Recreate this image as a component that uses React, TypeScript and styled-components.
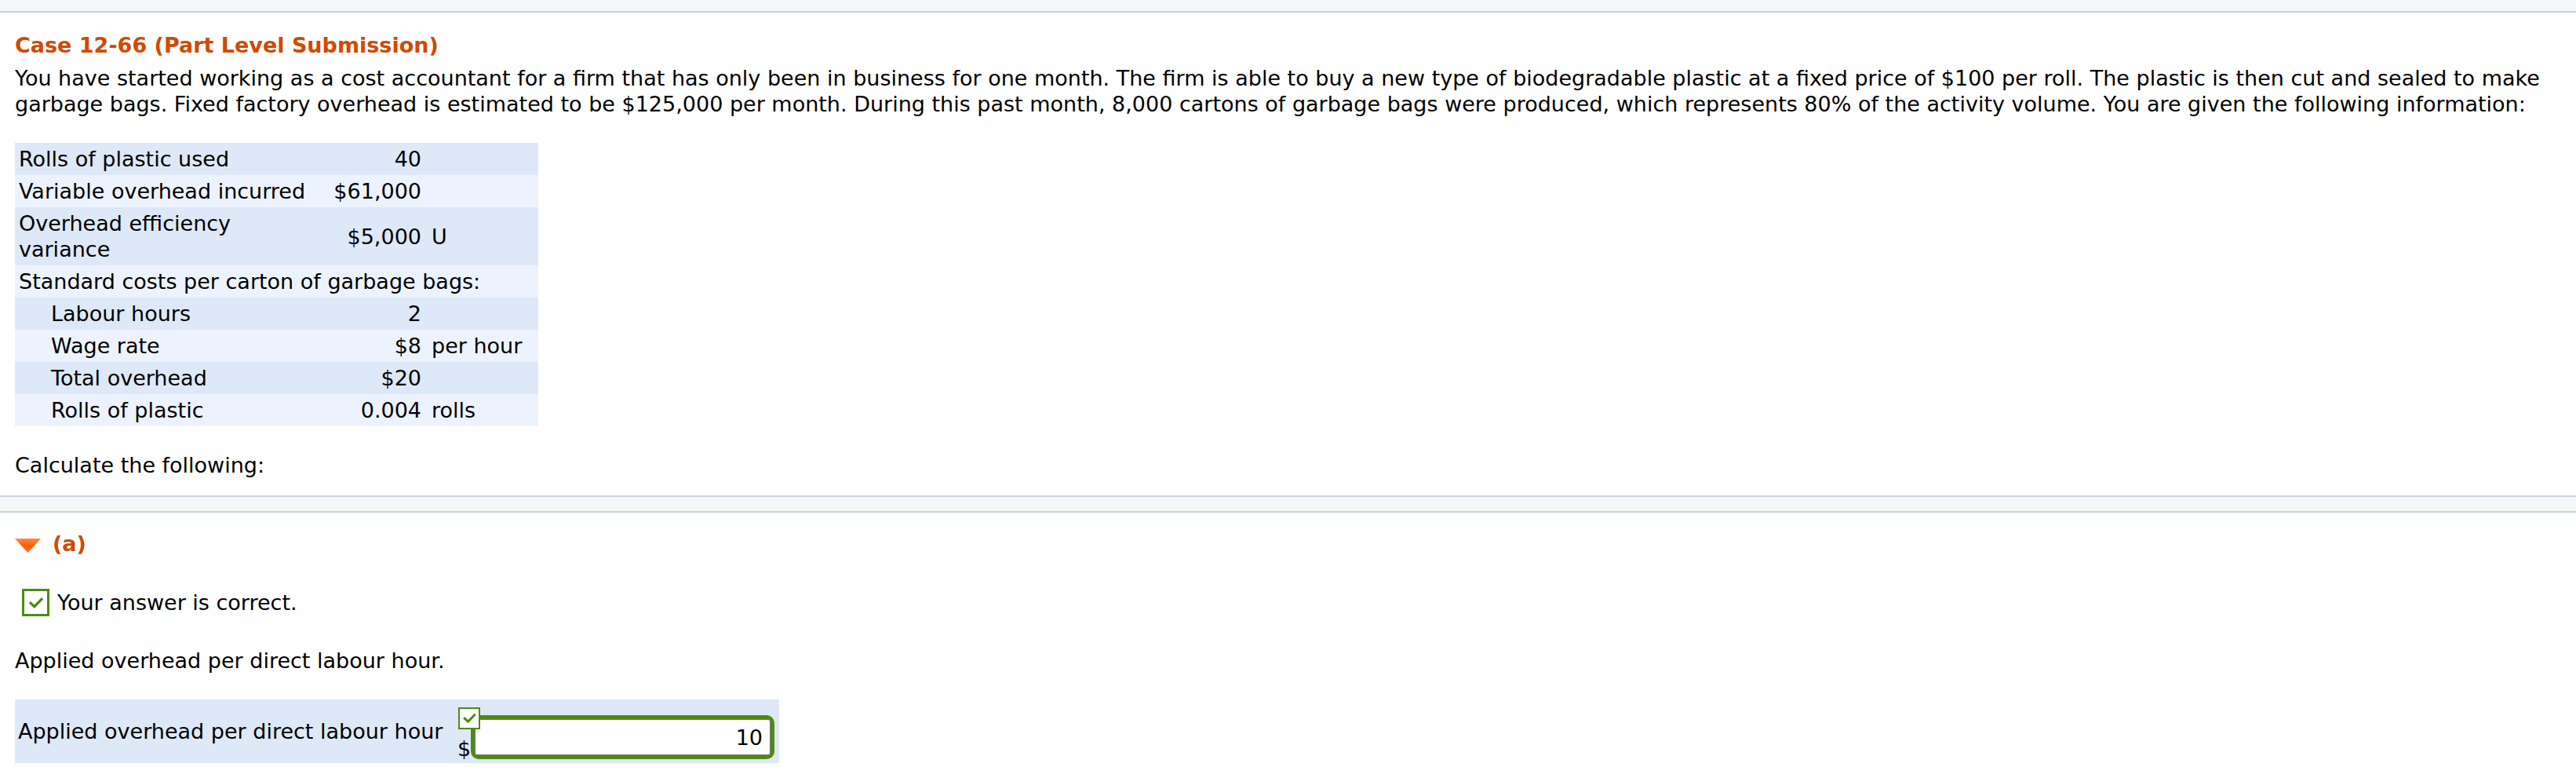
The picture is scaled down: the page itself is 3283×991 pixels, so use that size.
import styled, { createGlobalStyle } from 'styled-components'

const GlobalStyle = createGlobalStyle`
  body {
    margin: 0;
    background: #ffffff;
    color: #000000;
    font-family: 'DejaVu Sans', Verdana, sans-serif;
    font-size: 27px;
    line-height: 33px;
  }
`

const ORANGE = '#d04a02'
const GREEN = '#4f8a10'

const Page = styled.div`
  width: 3283px;
`

const TopBand = styled.div`
  height: 14px;
  background: #f4f7fa;
  border-bottom: 2px solid #c9d1de;
`

const Divider = styled.div`
  height: 18px;
  margin-top: 22px;
  background: #f4f7fa;
  border-top: 2px solid #c9d1de;
  border-bottom: 2px solid #c9d1de;
`

const Section = styled.div`
  padding: 0 10px 0 19px;
`

const Title = styled.h2`
  margin: 25px 0 0;
  font-size: 27px;
  line-height: 33px;
  font-weight: bold;
  color: ${ORANGE};
`

const Para = styled.p`
  margin: 9px 0 0;
`

const Table = styled.div`
  width: 667px;
  margin-top: 33px;
`

const Row = styled.div<{ $shade: 'dark' | 'light' }>`
  display: grid;
  grid-template-columns: 385px 138px 1fr;
  align-items: center;
  background: ${(p) => (p.$shade === 'dark' ? '#dde8f8' : '#ecf3fe')};
`

const Label = styled.div<{ $indent?: boolean; $span?: boolean }>`
  padding: 4px 5px 4px ${(p) => (p.$indent ? '46px' : '5px')};
  ${(p) => (p.$span ? 'grid-column: 1 / -1;' : '')}
`

const Amount = styled.div`
  padding-right: 5px;
  text-align: right;
  white-space: nowrap;
`

const Unit = styled.div`
  padding-left: 8px;
  white-space: nowrap;
`

const Plain = styled.p`
  margin: 33px 0 0;
`

const PartHeader = styled.div`
  display: flex;
  align-items: center;
  gap: 15px;
  margin-top: 23px;
  font-weight: bold;
  color: ${ORANGE};
`

const Caret = styled.svg`
  width: 33px;
  height: 18px;
  margin-top: 5px;
  flex: none;
`

const Feedback = styled.div`
  display: flex;
  align-items: center;
  gap: 10px;
  margin: 41px 0 0 9px;
`

const CheckBox = styled.span<{ $size: number; $line: number }>`
  display: inline-flex;
  align-items: center;
  justify-content: center;
  box-sizing: border-box;
  width: ${(p) => p.$size}px;
  height: ${(p) => p.$size}px;
  border: ${(p) => p.$line}px solid ${GREEN};
  background: #ffffff;
  flex: none;
`

const Prompt = styled.p`
  margin: 40px 0 0;
`

const AnswerRow = styled.div`
  display: flex;
  align-items: center;
  width: 974px;
  box-sizing: border-box;
  margin-top: 33px;
  padding: 4px 6px 5px 4px;
  background: #dde8f8;
`

const AnswerLabel = styled.span`
  flex: 1;
  white-space: nowrap;
`

const InputGroup = styled.div`
  position: relative;
  display: flex;
  align-items: flex-end;
  padding-top: 16px;
`

const Dollar = styled.span`
  line-height: 26px;
  width: 17px;
`

const Badge = styled.span`
  position: absolute;
  top: 0;
  left: 1px;
`

const Frame = styled.div`
  box-sizing: border-box;
  width: 387px;
  height: 56px;
  border: 5px solid ${GREEN};
  border-radius: 10px;
`

const Field = styled.input`
  box-sizing: border-box;
  width: 100%;
  height: 100%;
  margin: 0;
  padding: 0 9px 0 6px;
  border: 1px solid #767676;
  border-radius: 3px;
  background: #ffffff;
  color: #000000;
  font-family: 'DejaVu Sans', Verdana, sans-serif;
  font-size: 27px;
  text-align: right;
  outline: none;
`

const Tick = ({ w, h, sw }: { w: number; h: number; sw: number }) => (
  <svg width={w} height={h} viewBox="0 0 16 12">
    <polyline
      points="1.8,6.2 6,10.2 14.2,1.8"
      fill="none"
      stroke={GREEN}
      strokeWidth={sw}
      strokeLinecap="square"
      strokeLinejoin="miter"
    />
  </svg>
)

const rows: {
  label: string
  amount?: string
  unit?: string
  indent?: boolean
  span?: boolean
}[] = [
  { label: 'Rolls of plastic used', amount: '40' },
  { label: 'Variable overhead incurred', amount: '$61,000' },
  { label: 'Overhead efficiency variance', amount: '$5,000', unit: 'U' },
  { label: 'Standard costs per carton of garbage bags:', span: true },
  { label: 'Labour hours', amount: '2', indent: true },
  { label: 'Wage rate', amount: '$8', unit: 'per hour', indent: true },
  { label: 'Total overhead', amount: '$20', indent: true },
  { label: 'Rolls of plastic', amount: '0.004', unit: 'rolls', indent: true },
]

export default function App() {
  return (
    <Page>
      <GlobalStyle />
      <TopBand />
      <Section>
        <Title>Case 12-66 (Part Level Submission)</Title>
        <Para>
          You have started working as a cost accountant for a firm that has only been in
          business for one month. The firm is able to buy a new type of biodegradable plastic
          at a fixed price of $100 per roll. The plastic is then cut and sealed to make garbage
          bags. Fixed factory overhead is estimated to be $125,000 per month. During this past
          month, 8,000 cartons of garbage bags were produced, which represents 80% of the
          activity volume. You are given the following information:
        </Para>

        <Table>
          {rows.map((r, i) => (
            <Row key={r.label} $shade={i % 2 === 0 ? 'dark' : 'light'}>
              <Label $indent={r.indent} $span={r.span}>
                {r.label}
              </Label>
              {!r.span && (
                <>
                  <Amount>{r.amount}</Amount>
                  <Unit>{r.unit}</Unit>
                </>
              )}
            </Row>
          ))}
        </Table>

        <Plain>Calculate the following:</Plain>
      </Section>

      <Divider />

      <Section>
        <PartHeader>
          <Caret viewBox="0 0 33 18">
            <defs>
              <linearGradient id="caretFill" x1="0" y1="0" x2="0" y2="1">
                <stop offset="0" stopColor="#ff8a3a" />
                <stop offset="0.5" stopColor="#ff5e0a" />
                <stop offset="1" stopColor="#ff6a1e" />
              </linearGradient>
            </defs>
            <polygon points="0,0 33,0 16.5,18" fill="url(#caretFill)" />
          </Caret>
          <span>(a)</span>
        </PartHeader>

        <Feedback>
          <CheckBox $size={35} $line={3}>
            <Tick w={18} h={14} sw={2.8} />
          </CheckBox>
          <span>Your answer is correct.</span>
        </Feedback>

        <Prompt>Applied overhead per direct labour hour.</Prompt>

        <AnswerRow>
          <AnswerLabel>Applied overhead per direct labour hour</AnswerLabel>
          <InputGroup>
            <Badge>
              <CheckBox $size={28} $line={2}>
                <Tick w={17} h={12} sw={3} />
              </CheckBox>
            </Badge>
            <Dollar>$</Dollar>
            <Frame>
              <Field type="text" defaultValue="10" readOnly />
            </Frame>
          </InputGroup>
        </AnswerRow>
      </Section>
    </Page>
  )
}
